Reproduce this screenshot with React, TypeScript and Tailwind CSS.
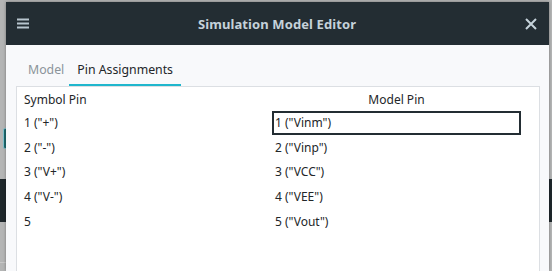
import React from "react";

const symbolPins = ['1 ("+")', '2 ("-")', '3 ("V+")', '4 ("V-")', "5"];
const modelPins = ['1 ("Vinm")', '2 ("Vinp")', '3 ("VCC")', '4 ("VEE")', '5 ("Vout")'];

export default function App() {
  return (
    <div
      className="relative w-[552px] h-[271px] overflow-hidden bg-[#b4b5b5]"
      style={{ fontFamily: '"Noto Sans", sans-serif' }}
    >
      {/* desktop behind the window */}
      <div className="absolute left-[3px] top-[128px] w-[4px] h-[21px] rounded-l-[2px] bg-[#1d6a6e] border border-[#7fbfcc]" />
      <div className="absolute left-0 top-[179px] w-[7px] h-[43px] bg-[#1e272b]" />
      <div className="absolute left-0 top-[262px] w-[7px] h-[1px] bg-[#c8c8c8]" />
      <div className="absolute right-0 top-[179px] w-[4px] h-[43px] bg-[#1e272b]" />

      <div className="relative ml-[6px] mt-[2px] w-[543px] h-[269px] flex flex-col bg-[#f8f9fb] shadow-[0_0_3px_rgba(0,0,0,0.35)]">
        {/* title bar */}
        <div className="h-[43px] shrink-0 flex items-center bg-[#232d33] px-[11px]">
          <svg width="12" height="11" viewBox="0 0 12 11" className="shrink-0">
            <rect x="0" y="0.5" width="12" height="2" fill="#b7c5ce" />
            <rect x="0" y="4.5" width="12" height="2" fill="#b7c5ce" />
            <rect x="0" y="8.5" width="12" height="2" fill="#b7c5ce" />
          </svg>
          <div className="flex-1 text-center text-[13px] font-bold text-[#c5d2da] tracking-[0.1px] pt-[2px]">
            Simulation Model Editor
          </div>
          <svg width="12" height="12" viewBox="0 0 12 12" className="shrink-0 mr-[1px]">
            <path d="M1 1 L11 11 M11 1 L1 11" stroke="#c5d2da" strokeWidth="2" />
          </svg>
        </div>

        {/* tabs */}
        <div className="flex items-end h-[41px] pl-[14px] shrink-0">
          <div className="pl-[8px] pr-[5px] h-[28px] text-[12.3px] text-[#8b949a] flex items-start pt-[3px]">Model</div>
          <div className="px-[8px] h-[28px] text-[12.3px] text-[#232629] flex items-start pt-[3px] border-b-2 border-[#1fb6cd]">
            Pin Assignments
          </div>
        </div>

        {/* content panel */}
        <div className="flex-1 ml-[10px] mr-[9px] bg-white border border-[#dcdfe3] border-b-0 text-[12px] text-[#232629]">
          <div className="flex pt-[3px]">
            <div className="w-[255px] pl-[7px]">
              <div className="h-[21px] leading-[20px]">Symbol Pin</div>
              {symbolPins.map((p) => (
                <div key={p} className="h-[24.7px] leading-[24px] mt-0">
                  {p}
                </div>
              ))}
            </div>
            <div className="w-[249px]">
              <div className="h-[21px] leading-[20px] text-center">Model Pin</div>
              {modelPins.map((p, i) => (
                <div
                  key={p}
                  className={
                    i === 0
                      ? "h-[24px] leading-[20px] pl-[1px] border-2 border-[#232d33] mb-[0.7px]"
                      : "h-[24.7px] leading-[24px] pl-[3px]"
                  }
                >
                  {p}
                </div>
              ))}
            </div>
          </div>
        </div>
      </div>
    </div>
  );
}
